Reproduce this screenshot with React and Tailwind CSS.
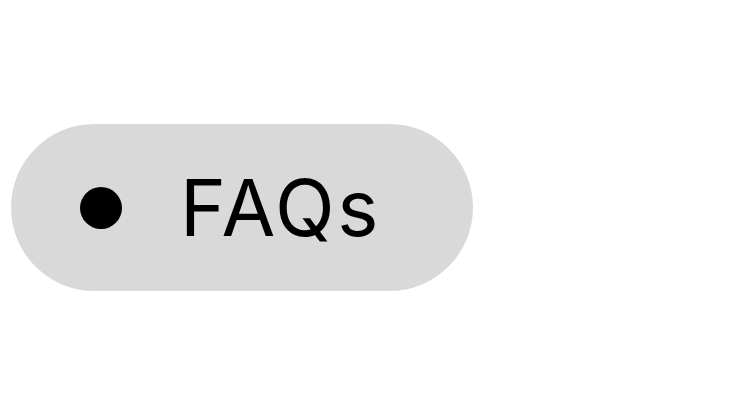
export default function App() {
  return (
    <div className="h-[414px] w-[741px] bg-white pl-[11px] pt-[124px]">
      <div className="flex h-[167px] w-[462px] items-center rounded-full bg-[#d9d9d9] pl-[69px]">
        <span className="h-[42px] w-[42px] shrink-0 rounded-full bg-black" />
        <span
          className="ml-[58px] text-[78px] leading-none font-normal text-black tracking-[2.5px]"
          style={{ fontFamily: "Inter, 'Noto Sans', sans-serif" }}
        >
          FAQs
        </span>
      </div>
    </div>
  );
}
